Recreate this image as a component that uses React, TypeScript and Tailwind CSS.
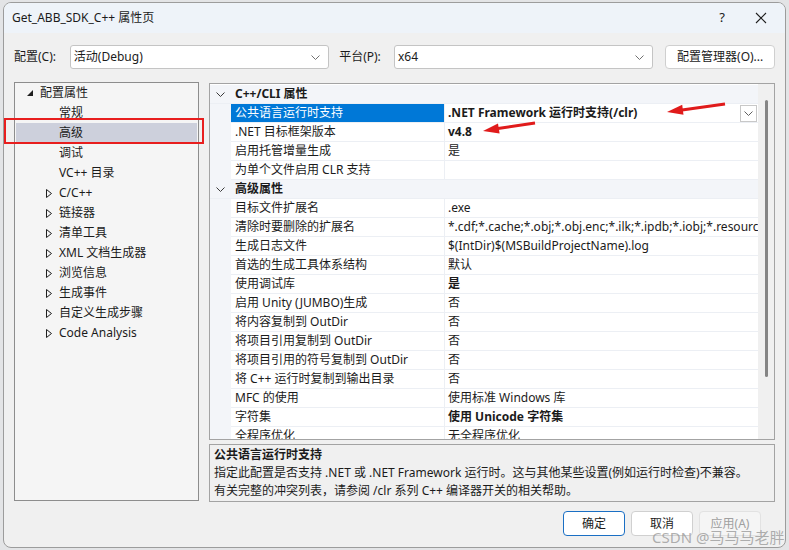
import React from 'react'

const treeItems: { label: string; kind: 'root' | 'leaf' | 'closed'; selected?: boolean }[] = [
  { label: '配置属性', kind: 'root' },
  { label: '常规', kind: 'leaf' },
  { label: '高级', kind: 'leaf', selected: true },
  { label: '调试', kind: 'leaf' },
  { label: 'VC++ 目录', kind: 'leaf' },
  { label: 'C/C++', kind: 'closed' },
  { label: '链接器', kind: 'closed' },
  { label: '清单工具', kind: 'closed' },
  { label: 'XML 文档生成器', kind: 'closed' },
  { label: '浏览信息', kind: 'closed' },
  { label: '生成事件', kind: 'closed' },
  { label: '自定义生成步骤', kind: 'closed' },
  { label: 'Code Analysis', kind: 'closed' },
]

type Row =
  | { header: string }
  | { name: string; value: string; bold?: boolean; selected?: boolean }

const rows: Row[] = [
  { header: 'C++/CLI 属性' },
  { name: '公共语言运行时支持', value: '.NET Framework 运行时支持(/clr)', bold: true, selected: true },
  { name: '.NET 目标框架版本', value: 'v4.8', bold: true },
  { name: '启用托管增量生成', value: '是' },
  { name: '为单个文件启用 CLR 支持', value: '' },
  { header: '高级属性' },
  { name: '目标文件扩展名', value: '.exe' },
  { name: '清除时要删除的扩展名', value: '*.cdf;*.cache;*.obj;*.obj.enc;*.ilk;*.ipdb;*.iobj;*.resources;*.tlb' },
  { name: '生成日志文件', value: '$(IntDir)$(MSBuildProjectName).log' },
  { name: '首选的生成工具体系结构', value: '默认' },
  { name: '使用调试库', value: '是', bold: true },
  { name: '启用 Unity (JUMBO)生成', value: '否' },
  { name: '将内容复制到 OutDir', value: '否' },
  { name: '将项目引用复制到 OutDir', value: '否' },
  { name: '将项目引用的符号复制到 OutDir', value: '否' },
  { name: '将 C++ 运行时复制到输出目录', value: '否' },
  { name: 'MFC 的使用', value: '使用标准 Windows 库' },
  { name: '字符集', value: '使用 Unicode 字符集', bold: true },
  { name: '全程序优化', value: '无全程序优化' },
]

function Chevron({ className = '' }: { className?: string }) {
  return (
    <svg width="9" height="5" viewBox="0 0 9 5" className={className}>
      <path d="M0.5 0.5 L4.5 4.5 L8.5 0.5" fill="none" stroke="currentColor" strokeWidth="1" />
    </svg>
  )
}

function Combo({ text }: { text: string }) {
  return (
    <div className="flex h-[24px] w-[260px] items-center justify-between rounded-[3px] border border-[#c4c4c4] bg-white pl-[3px] pr-[8px]">
      <span>{text}</span>
      <Chevron className="text-[#707070]" />
    </div>
  )
}

export default function App() {
  return (
    <div className="relative h-[550px] w-[789px] overflow-hidden bg-[#e3e4e6] pt-[2px] font-['Noto_Sans','Noto_Sans_CJK_SC',sans-serif] text-[12px] text-[#1b1b1b]">
      {/* dialog window */}
      <div className="ml-[3px] flex h-[546px] w-[783px] flex-col overflow-hidden rounded-[8px] border border-[#9c9c9c] bg-[#f0f0f0]">
        {/* title bar */}
        <div className="flex h-[30px] shrink-0 items-center justify-between bg-[#eef3f9] pl-[8px] pr-[18px]">
          <span className="-mt-[1px]">Get_ABB_SDK_C++ 属性页</span>
          <div className="flex items-center gap-[30px] text-[#202020]">
            <span className="text-[13px]">?</span>
            <svg width="12" height="12" viewBox="0 0 12 12">
              <path d="M1 1 L11 11 M11 1 L1 11" stroke="#202020" strokeWidth="1.1" />
            </svg>
          </div>
        </div>

        <div className="flex flex-1 flex-col pl-[10px] pr-[10px]">
          {/* config row */}
          <div className="mt-[12px] flex h-[24px] items-center">
            <span className="w-[56px]">配置(C):</span>
            <Combo text="活动(Debug)" />
            <span className="ml-[10px] w-[55px]">平台(P):</span>
            <Combo text="x64" />
            <div className="ml-[12px] flex h-[24px] w-[110px] items-center justify-center rounded-[4px] border border-[#cfcfcf] bg-white">
              配置管理器(O)...
            </div>
          </div>

          {/* main area */}
          <div className="mt-[13px] flex">
            {/* tree */}
            <div className="h-[419px] w-[186px] border border-[#8d8d8d] bg-[#f5f5f5]">
              {treeItems.map((t) => (
                <div
                  key={t.label}
                  className={`mx-[1px] flex h-[20px] items-center ${t.selected ? 'bg-[#cdd0dc]' : ''}`}
                >
                  {t.kind === 'root' && (
                    <>
                      <svg width="6" height="6" viewBox="0 0 6 6" className="ml-[11px]">
                        <polygon points="6,0 6,6 0,6" fill="#1e1e1e" />
                      </svg>
                      <span className="ml-[7px]">{t.label}</span>
                    </>
                  )}
                  {t.kind === 'leaf' && <span className="ml-[43px]">{t.label}</span>}
                  {t.kind === 'closed' && (
                    <>
                      <svg width="6" height="9" viewBox="0 0 6 9" className="ml-[30px]">
                        <polygon points="0.5,0.5 5.5,4.5 0.5,8.5" fill="none" stroke="#1e1e1e" strokeWidth="1" />
                      </svg>
                      <span className="ml-[7px]">{t.label}</span>
                    </>
                  )}
                </div>
              ))}
            </div>

            {/* right column */}
            <div className="ml-[10px] flex w-[566px] flex-col">
              {/* property grid */}
              <div className="mt-[1px] flex h-[357px] border border-[#a3a3a3] bg-white">
                <div className="flex flex-1 flex-col overflow-hidden pt-[1px]">
                  {rows.map((r, i) =>
                    'header' in r ? (
                      <div key={i} className="flex h-[19px] shrink-0 items-center border-b border-[#eceff4] bg-[#f3f5f9]">
                        <div className="flex w-[21px] justify-center">
                          <Chevron className="text-[#3a3a3a]" />
                        </div>
                        <span className="ml-[4px] font-bold">{r.header}</span>
                      </div>
                    ) : (
                      <div key={i} className="flex h-[19px] shrink-0 items-stretch">
                        <div className="w-[21px] bg-[#f3f5f9]" />
                        <div
                          className={`flex w-[214px] items-center whitespace-nowrap border-b border-r border-[#eceff4] pl-[4px] ${
                            r.selected ? 'bg-[#0078d7] text-white' : ''
                          }`}
                        >
                          {r.name}
                        </div>
                        <div className="flex flex-1 items-center justify-between overflow-hidden whitespace-nowrap border-b border-[#eceff4] pl-[3px]">
                          <span className={r.bold ? 'font-bold' : ''}>{r.value}</span>
                          {r.selected && (
                            <div className="mr-[1px] flex h-[17px] w-[17px] shrink-0 items-center justify-center border border-[#c8c8c8] bg-white">
                              <Chevron className="text-[#606060]" />
                            </div>
                          )}
                        </div>
                      </div>
                    ),
                  )}
                </div>
                {/* scrollbar */}
                <div className="w-[16px] shrink-0 bg-[#f0f0f0] pt-[16px]">
                  <div className="ml-[7px] h-[277px] w-[3px] rounded-full bg-[#858585]" />
                </div>
              </div>

              {/* description */}
              <div className="mt-[4px] h-[58px] border border-[#a3a3a3] bg-[#f0f0f0] pl-[4px] pt-[1px] leading-[18px]">
                <div className="font-bold">公共语言运行时支持</div>
                <div className="whitespace-nowrap">指定此配置是否支持 .NET 或 .NET Framework 运行时。这与其他某些设置(例如运行时检查)不兼容。</div>
                <div>有关完整的冲突列表，请参阅 /clr 系列 C++ 编译器开关的相关帮助。</div>
              </div>
            </div>
          </div>

          {/* buttons */}
          <div className="mt-[9px] flex justify-end gap-[6px] pr-[14px]">
            <div className="flex h-[25px] w-[62px] items-center justify-center rounded-[4px] border border-[#1a6fc4] bg-white">确定</div>
            <div className="flex h-[25px] w-[62px] items-center justify-center rounded-[4px] border border-[#d0d0d0] bg-white">取消</div>
            <div className="flex h-[25px] w-[62px] items-center justify-center rounded-[4px] border border-[#e2e2e2] bg-[#f5f5f5] text-[#a0a0a0]">应用(A)</div>
          </div>
        </div>
      </div>

      {/* red highlight box */}
      <div className="absolute left-[4px] top-[118px] h-[26px] w-[200px] border-2 border-[#e81e1e]" />

      {/* red arrows */}
      <svg className="pointer-events-none absolute left-0 top-0" width="789" height="550">
        <line x1="725" y1="104" x2="682" y2="110" stroke="#e01b1b" strokeWidth="3" />
        <polygon points="667,112 683.5,114.8 682.2,104.8" fill="#e01b1b" />
        <line x1="535" y1="123" x2="498" y2="128.6" stroke="#e01b1b" strokeWidth="3" />
        <polygon points="483,131 499.6,133.5 498,123.6" fill="#e01b1b" />
      </svg>

      {/* watermark */}
      <div className="absolute left-[652px] top-[526px] text-[15px] text-[rgba(150,150,150,0.75)]">CSDN @马马马老胖</div>
    </div>
  )
}
